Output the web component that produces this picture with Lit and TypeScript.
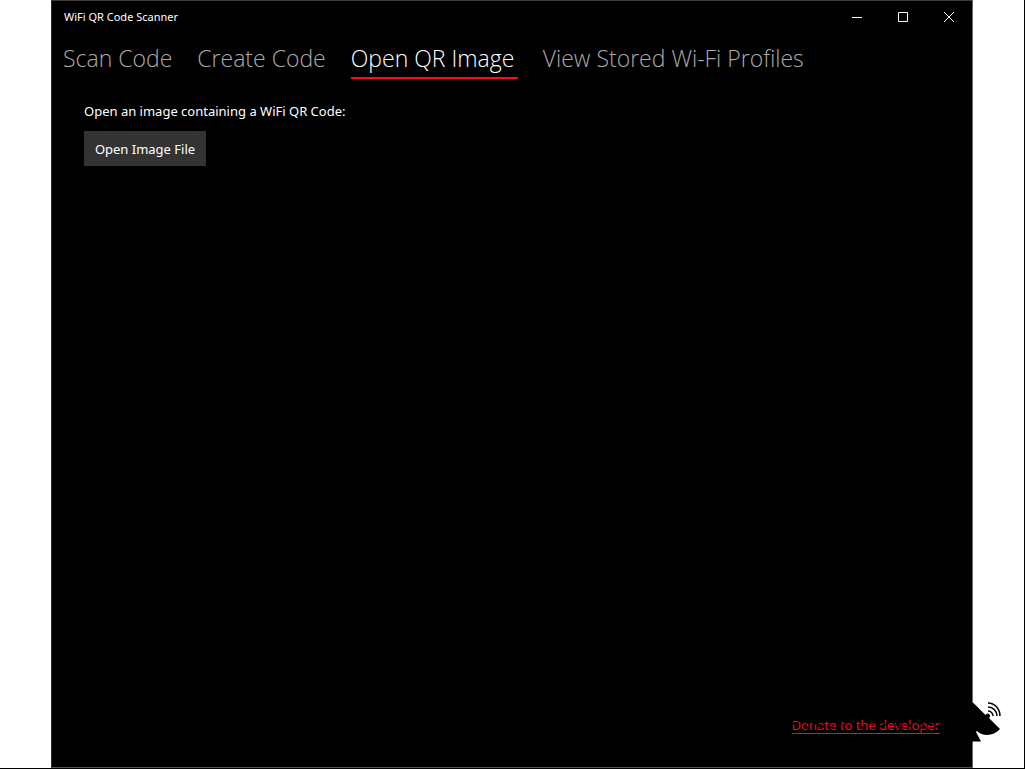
import { LitElement, html, css } from "lit";
import { customElement, state } from "lit/decorators.js";

const TABS = ["Scan Code", "Create Code", "Open QR Image", "View Stored Wi-Fi Profiles"];

@customElement("app-root")
export class AppRoot extends LitElement {
  static styles = css`
    :host {
      display: flex;
      box-sizing: border-box;
      min-height: 100vh;
      padding: 0 51px;
      background: #fff;
      border-right: 1px solid #000;
      border-bottom: 1px solid #000;
      font-family: "Noto Sans", "Open Sans", sans-serif;
      color: #fff;
    }
    .window {
      flex: 1;
      position: relative;
      display: flex;
      flex-direction: column;
      background: #000;
      border: 1px solid #3c3c3c;
      border-left-color: #2b2b2b;
      border-right-color: #6a6a6a;
      border-bottom-color: #555;
    }
    button {
      font: inherit;
      color: inherit;
      background: none;
      border: 0;
      padding: 0;
      margin: 0;
      white-space: nowrap;
    }
    .titlebar {
      display: flex;
      justify-content: space-between;
      height: 32px;
    }
    .title {
      padding-left: 12px;
      font-size: 11px;
      line-height: 32px;
    }
    .controls {
      display: flex;
    }
    .control {
      width: 46px;
      display: grid;
      place-items: center;
    }
    .tabs {
      display: flex;
      gap: 25px;
      padding: 4px 11px 0;
    }
    .tab {
      box-sizing: border-box;
      height: 42px;
      font-family: "Open Sans", "Noto Sans", sans-serif;
      font-size: 23px;
      font-weight: 300;
      line-height: 42px;
      text-align: left;
      color: #aaa;
      border-bottom: 2px solid transparent;
    }
    .tab.active {
      min-width: 167px;
      color: #fff;
      border-bottom-color: #ff0a1e;
    }
    .page {
      flex: 1;
      display: flex;
      flex-direction: column;
      align-items: flex-start;
      padding: 22px 32px;
    }
    .prompt {
      margin: 0 0 10px;
      font-size: 13px;
      line-height: 20px;
    }
    .open {
      height: 35px;
      min-width: 122px;
      padding: 0 10px;
      background: #333;
      font-size: 13px;
    }
    .donate {
      position: relative;
      margin: auto 0 10px auto;
      font-size: 13px;
      line-height: 20px;
      color: #f00a1e;
      text-decoration-skip-ink: none;
      text-underline-offset: 3px;
    }
    .wear {
      position: absolute;
      inset: 0;
      width: 100%;
      height: 100%;
      pointer-events: none;
    }
    .dish {
      position: absolute;
      left: 100%;
      bottom: 24px;
    }
  `;

  @state() private active = 2;

  render() {
    return html`
      <main class="window">
        <header class="titlebar">
          <span class="title">WiFi QR Code Scanner</span>
          <div class="controls">
            <button class="control" aria-label="Minimize">
              <svg width="10" height="10"><path d="M0 5.5H10" stroke="#fff" /></svg>
            </button>
            <button class="control" aria-label="Maximize">
              <svg width="10" height="10"><path d="M.5.5h9v9h-9z" fill="none" stroke="#fff" /></svg>
            </button>
            <button class="control" aria-label="Close">
              <svg width="10" height="10"><path d="M0 0L10 10M10 0L0 10" stroke="#fff" /></svg>
            </button>
          </div>
        </header>
        <nav class="tabs" role="tablist">
          ${TABS.map(
            (t, i) => html`<button
              role="tab"
              class="tab ${i === this.active ? "active" : ""}"
              aria-selected=${i === this.active}
              @click=${() => (this.active = i)}
            >${t}</button>`
          )}
        </nav>
        <section class="page">
          <p class="prompt">Open an image containing a WiFi QR Code:</p>
          <button class="open">Open Image File</button>
          <a class="donate" href="#donate">Donate to the developer
            <svg class="wear" viewBox="0 0 152 20" preserveAspectRatio="none" aria-hidden="true">
              <path
                d="M0 8.5h7M13 12.5h5M21 8.5h4M28 11.5h6M39 12.5h4M46 8.5h5M63 9.5h4M70 12.5h5M79 7.5h7M88 11.5h4M93 9.5h4M106 9.5h5M108 12.5h6M118 10.5h4M129 8.5h5M131 12.5h6M140 9.5h4M146 11.5h4M9 17h2M27 17h2M65 17h2M99 17h2M114 17h2"
                stroke="#000"
                stroke-width="2"
              />
            </svg>
          </a>
        </section>
        <svg class="dish" width="32" height="44" aria-hidden="true">
          <path d="M0 3L2 4.5L13.5 16A2.4 2.4 0 1 1 17 19L28 30C22 37 11 38 5 32L4 33L9 42.5H0Z" />
          <path
            d="M16 12a5 5 0 0 1 5 5M16 8a9 9 0 0 1 9 9M16 4a12 13 0 0 1 12 13"
            fill="none"
            stroke="#000"
            stroke-width="1.5"
          />
        </svg>
      </main>
    `;
  }
}
